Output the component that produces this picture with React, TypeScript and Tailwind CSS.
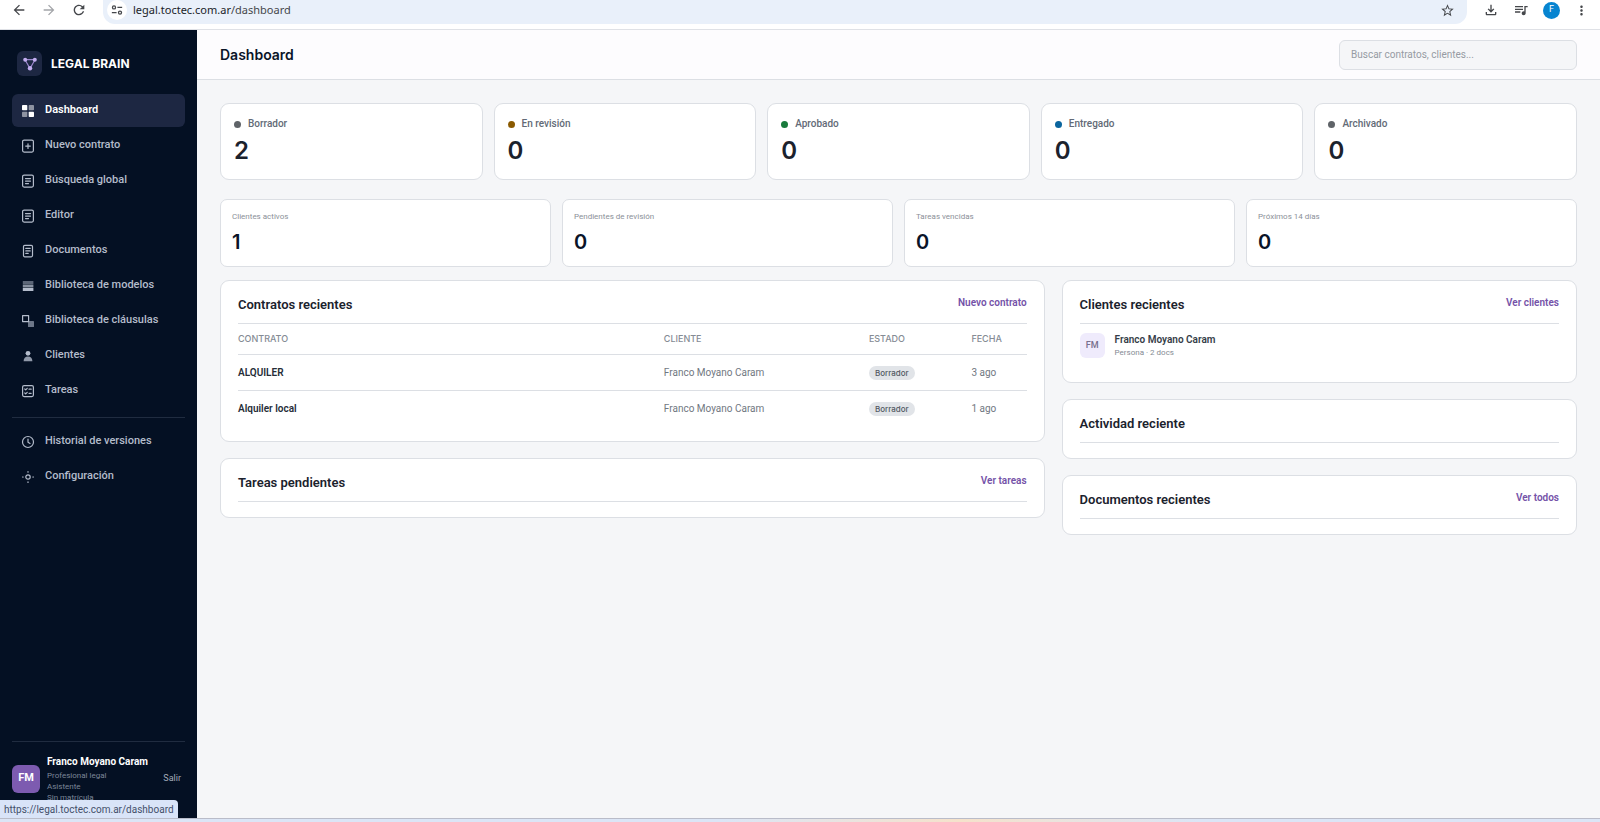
import React, { FC, ReactNode } from "react";
import {
  MdArrowBack,
  MdArrowForward,
  MdMoreVert,
  MdOutlineFileDownload,
  MdOutlineQueueMusic,
  MdRefresh,
  MdStarOutline,
} from "react-icons/md";

interface NavItemProps {
  label: string;
  icon: ReactNode;
  active?: boolean;
}

interface PanelProps {
  title: string;
  link?: string;
  children?: ReactNode;
}

const Icon: FC<{ children: ReactNode }> = ({ children }) => (
  <svg viewBox="0 0 16 16" className="size-4 shrink-0" fill="none" stroke="currentColor" strokeWidth="1.2" strokeLinecap="round" strokeLinejoin="round" aria-hidden="true">
    {children}
  </svg>
);

const pageIcon = (
  <Icon>
    <rect x="2.6" y="2.1" width="10.8" height="12" rx="1.5" />
    <path d="M5.5 5.6h5M5.5 8.1h5M5.5 10.6h3" />
  </Icon>
);

const mainNav: NavItemProps[] = [
  {
    label: "Dashboard",
    active: true,
    icon: (
      <Icon>
        <g fill="currentColor" stroke="none">
          <rect x="2" y="2" width="5.3" height="5.3" rx="0.8" />
          <rect x="8.7" y="2" width="5.3" height="5.3" rx="0.8" opacity="0.5" />
          <rect x="2" y="8.7" width="5.3" height="5.3" rx="0.8" opacity="0.5" />
          <rect x="8.7" y="8.7" width="5.3" height="5.3" rx="0.8" />
        </g>
      </Icon>
    ),
  },
  {
    label: "Nuevo contrato",
    icon: (
      <Icon>
        <rect x="2.6" y="2.1" width="10.8" height="12" rx="1.5" />
        <path d="M8 5.8v4.6M5.7 8.1h4.6" />
      </Icon>
    ),
  },
  { label: "Búsqueda global", icon: pageIcon },
  { label: "Editor", icon: pageIcon },
  {
    label: "Documentos",
    icon: (
      <Icon>
        <rect x="3.5" y="2.4" width="9" height="11.4" rx="1.2" />
        <path d="M5.8 5.4h4.4M5.8 7.9h4.4M5.8 10.4h2.4" />
      </Icon>
    ),
  },
  {
    label: "Biblioteca de modelos",
    icon: (
      <Icon>
        <g fill="currentColor" stroke="none">
          <rect x="2.8" y="3" width="10.6" height="3" opacity="0.5" />
          <rect x="2.8" y="6.5" width="10.6" height="3" opacity="0.75" />
          <rect x="2.8" y="10" width="10.6" height="3" />
        </g>
      </Icon>
    ),
  },
  {
    label: "Biblioteca de cláusulas",
    icon: (
      <Icon>
        <rect x="2.6" y="2.6" width="6" height="6" />
        <rect x="8" y="8" width="6" height="6" rx="0.6" fill="currentColor" stroke="none" opacity="0.6" />
      </Icon>
    ),
  },
  {
    label: "Clientes",
    icon: (
      <Icon>
        <g fill="currentColor" stroke="none">
          <circle cx="8" cy="5.3" r="2.4" />
          <path d="M3.6 13.2c0-3 1.7-4.7 4.4-4.7s4.4 1.7 4.4 4.7z" opacity="0.8" />
        </g>
      </Icon>
    ),
  },
  {
    label: "Tareas",
    icon: (
      <Icon>
        <rect x="2.6" y="2.6" width="10.8" height="11" rx="1.5" />
        <path d="M4.8 6l.9.9 1.5-1.6M9 6.2h2.2M4.8 10l.9.9 1.5-1.6M9 10.3h2.2" />
      </Icon>
    ),
  },
];

const secondaryNav: NavItemProps[] = [
  {
    label: "Historial de versiones",
    icon: (
      <Icon>
        <circle cx="8" cy="8" r="5.5" />
        <path d="M8 5v3.2l2 1.2" />
      </Icon>
    ),
  },
  {
    label: "Configuración",
    icon: (
      <Icon>
        <circle cx="8" cy="8" r="2.2" />
        <path d="M8 2.5v.7M8 12.8v.7M2.5 8h.7M12.8 8h.7" />
      </Icon>
    ),
  },
];

const statuses = [
  { label: "Borrador", value: 2, dot: "bg-[#5f6368]" },
  { label: "En revisión", value: 0, dot: "bg-[#8a5a00]" },
  { label: "Aprobado", value: 0, dot: "bg-[#187a3c]" },
  { label: "Entregado", value: 0, dot: "bg-[#0a659e]" },
  { label: "Archivado", value: 0, dot: "bg-[#5f6368]" },
];

const metrics = [
  { label: "Clientes activos", value: 1 },
  { label: "Pendientes de revisión", value: 0 },
  { label: "Tareas vencidas", value: 0 },
  { label: "Próximos 14 días", value: 0 },
];

const contracts = [
  { name: "ALQUILER", client: "Franco Moyano Caram", status: "Borrador", date: "3 ago" },
  { name: "Alquiler local", client: "Franco Moyano Caram", status: "Borrador", date: "1 ago" },
];

const NavItem: FC<NavItemProps> = ({ label, icon, active }) => (
  <a
    href="#"
    className={
      active
        ? "flex h-[33px] items-center gap-[9px] rounded-md bg-[#1d2742] px-2 text-[11px] font-semibold text-white"
        : "flex h-[33px] items-center gap-[9px] rounded-md px-2 text-[11px] font-medium text-[#b4bccb]"
    }
  >
    {icon}
    {label}
  </a>
);

const Panel: FC<PanelProps> = ({ title, link, children }) => (
  <section className="rounded-[9px] border border-[#dcdfe4] bg-white px-[17px] pt-4 pb-[15px]">
    <div className="flex h-[27px] items-start justify-between border-b border-[#dcdfe4]">
      <h2 className="text-[13px] leading-4 font-semibold text-[#1b222d]">{title}</h2>
      {link && (
        <a href="#" className="text-[10px] leading-3 font-semibold text-[#7452a8]">
          {link}
        </a>
      )}
    </div>
    {children}
  </section>
);

const BrowserBar = () => (
  <div className="flex h-[30px] shrink-0 items-start border-b border-[#dfe1e6] bg-white text-[#45474b]">
    <div className="flex h-5 items-center gap-[14px] pr-4 pl-[11px]">
      <button type="button" aria-label="Atrás"><MdArrowBack size={16} /></button>
      <button type="button" aria-label="Adelante" className="text-[#a3a5a9]"><MdArrowForward size={16} /></button>
      <button type="button" aria-label="Recargar"><MdRefresh size={16} /></button>
    </div>
    <div className="flex h-6 flex-1 items-start rounded-b-xl bg-[#e9f0fa] pr-3 pl-1">
      <div className="flex h-5 flex-1 items-center gap-[6px]">
        <button type="button" aria-label="Información del sitio" className="flex size-5 items-center justify-center rounded-full bg-white">
          <svg viewBox="0 0 14 14" className="size-3" fill="none" stroke="currentColor" strokeWidth="1.5">
            <circle cx="3.5" cy="4" r="1.8" />
            <path d="M7.500 4H13M1 10h5.500" />
            <circle cx="10.5" cy="10" r="1.8" />
          </svg>
        </button>
        <span className="flex-1 font-['Noto_Sans',sans-serif] text-[11px]">
          <span className="text-[#202328]">legal.toctec.com.ar</span>/dashboard
        </span>
        <button type="button" aria-label="Favorito"><MdStarOutline size={15} /></button>
      </div>
    </div>
    <div className="flex h-5 items-center gap-[14px] pr-[11px] pl-4">
      <button type="button" aria-label="Descargas"><MdOutlineFileDownload size={16} /></button>
      <button type="button" aria-label="Multimedia"><MdOutlineQueueMusic size={16} /></button>
      <button type="button" className="size-[17px] rounded-full bg-[#0784d0] text-[9px] text-white">F</button>
      <button type="button" aria-label="Menú"><MdMoreVert size={15} /></button>
    </div>
  </div>
);

const Sidebar = () => (
  <aside className="flex w-[197px] shrink-0 flex-col overflow-hidden bg-[#041023] px-3">
    <div className="flex items-center gap-[9px] px-[5px] pt-[21px] pb-[18px]">
      <span className="flex size-[25px] items-center justify-center rounded-md bg-[#1d2742]">
        <svg viewBox="0 0 16 16" className="size-4" stroke="#9a86cc" strokeWidth="1.2" fill="none">
          <path d="M3 3.700h10L8 12.500z" />
          <g fill="#c3aef0" stroke="none">
            <circle cx="3.200" cy="3.700" r="2" />
            <circle cx="12.800" cy="3.700" r="2" />
            <circle cx="8" cy="12.300" r="2.200" />
          </g>
        </svg>
      </span>
      <span className="font-[Inter,sans-serif] text-xs font-bold text-white">LEGAL BRAIN</span>
    </div>
    <nav className="flex flex-col gap-[2px]">
      {mainNav.map((item) => (
        <NavItem key={item.label} {...item} />
      ))}
      <hr className="mt-2 mb-[5px] border-[#202c40]" />
      {secondaryNav.map((item) => (
        <NavItem key={item.label} {...item} />
      ))}
    </nav>
    <div className="mt-auto flex h-[77px] items-center gap-[7px] border-t border-[#202c40] pb-[3px]">
      <span className="flex size-7 shrink-0 items-center justify-center rounded-md bg-[#7d5bb0] text-[11px] font-bold text-white">FM</span>
      <div className="flex-1 text-[8px] leading-[11px] text-[#7c8698]">
        <p className="text-[10px] leading-4 font-bold whitespace-nowrap text-white">Franco Moyano Caram</p>
        <p>Profesional legal</p>
        <p>Asistente</p>
        <p>Sin matrícula</p>
      </div>
      <button type="button" className="pr-1 text-[9px] text-[#a3acba]">Salir</button>
    </div>
  </aside>
);

const App = () => {
  return (
    <div className="flex h-screen flex-col overflow-hidden font-[Roboto,sans-serif]">
      <BrowserBar />
      <div className="relative flex min-h-0 flex-1">
        <Sidebar />
        <main className="min-w-0 flex-1 bg-[#f5f6f8]">
          <header className="flex h-[50px] items-center justify-between border-b border-[#dcdfe4] bg-[#fdfcfe] px-[23px]">
            <h1 className="font-[Inter,sans-serif] text-sm font-semibold text-[#0a1428]">Dashboard</h1>
            <input
              type="search"
              aria-label="Buscar contratos, clientes"
              placeholder="Buscar contratos, clientes..."
              className="h-[30px] w-[238px] rounded-md border border-[#dcdfe4] bg-[#f5f6f8] px-[11px] text-[10px] placeholder:text-[#969ba3]"
            />
          </header>

          <div className="px-[23px] pt-[23px]">
            <div className="grid grid-cols-5 gap-[11px]">
              {statuses.map((s) => (
                <div key={s.label} className="h-[77px] rounded-[9px] border border-[#dcdfe4] bg-white px-[13px] pt-3">
                  <p className="flex items-center gap-[7px] text-[10px] leading-4 font-medium text-[#626a76]">
                    <span className={`size-[7px] rounded-full ${s.dot}`} />
                    {s.label}
                  </p>
                  <p className="mt-[5px] font-[Inter,sans-serif] text-2xl leading-7 font-semibold text-[#1b222d]">{s.value}</p>
                </div>
              ))}
            </div>

            <div className="mt-[19px] grid grid-cols-4 gap-[11px]">
              {metrics.map((m) => (
                <div key={m.label} className="h-[68px] rounded-[7px] border border-[#dcdfe4] bg-white px-[11px] pt-[11px]">
                  <p className="text-[8px] leading-3 text-[#8b9098]">{m.label}</p>
                  <p className="mt-[7px] font-[Inter,sans-serif] text-xl leading-6 font-semibold text-[#0a1428]">{m.value}</p>
                </div>
              ))}
            </div>

            <div className="mt-[13px] grid grid-cols-[8fr_5fr] items-start gap-[17px]">
              <div className="flex flex-col gap-4">
                <Panel title="Contratos recientes" link="Nuevo contrato">
                  <table className="w-full table-fixed text-left text-[10px]">
                    <thead className="font-[Inter,sans-serif] text-[9px] text-[#858b94]">
                      <tr className="h-[30px] border-b border-[#dcdfe4]">
                        <th className="w-[54%] font-medium">CONTRATO</th>
                        <th className="w-[26%] font-medium">CLIENTE</th>
                        <th className="w-[13%] font-medium">ESTADO</th>
                        <th className="font-medium">FECHA</th>
                      </tr>
                    </thead>
                    <tbody>
                      {contracts.map((c) => (
                        <tr key={c.name} className="h-9 border-b border-[#dcdfe4] text-[#717781] last:border-b-0">
                          <td className="font-semibold text-[#262d38]">{c.name}</td>
                          <td>{c.client}</td>
                          <td>
                            <span className="inline-block rounded-full bg-[#e1e4e8] px-[6px] font-[Inter,sans-serif] text-[8px] leading-[14px] font-medium text-[#525963]">
                              {c.status}
                            </span>
                          </td>
                          <td>{c.date}</td>
                        </tr>
                      ))}
                    </tbody>
                  </table>
                </Panel>
                <Panel title="Tareas pendientes" link="Ver tareas" />
              </div>

              <div className="flex flex-col gap-4">
                <Panel title="Clientes recientes" link="Ver clientes">
                  <div className="flex items-start gap-[10px] pt-[9px] pb-2">
                    <span className="flex size-[25px] items-center justify-center rounded-md bg-[#efebfc] text-[9px] font-medium text-[#776f8c]">FM</span>
                    <div>
                      <p className="text-[10px] leading-[14px] font-semibold text-[#363d48]">Franco Moyano Caram</p>
                      <p className="text-[8px] leading-3 text-[#858b94]">Persona · 2 docs</p>
                    </div>
                  </div>
                </Panel>
                <Panel title="Actividad reciente" />
                <Panel title="Documentos recientes" link="Ver todos" />
              </div>
            </div>
          </div>
        </main>

        <div className="absolute bottom-0 left-0 flex h-[18px] items-center rounded-tr bg-[#d9e4f8] px-1 text-[10px] text-[#44506a]">
          https://legal.toctec.com.ar/dashboard
        </div>
      </div>
      <div className="h-1 shrink-0 border-t border-[#b9bcc9] bg-linear-to-r from-[#dbe5f6] from-45% via-[#f5e2cb] via-60% to-[#dbe5f6] to-75%" />
    </div>
  );
};

export default App;
